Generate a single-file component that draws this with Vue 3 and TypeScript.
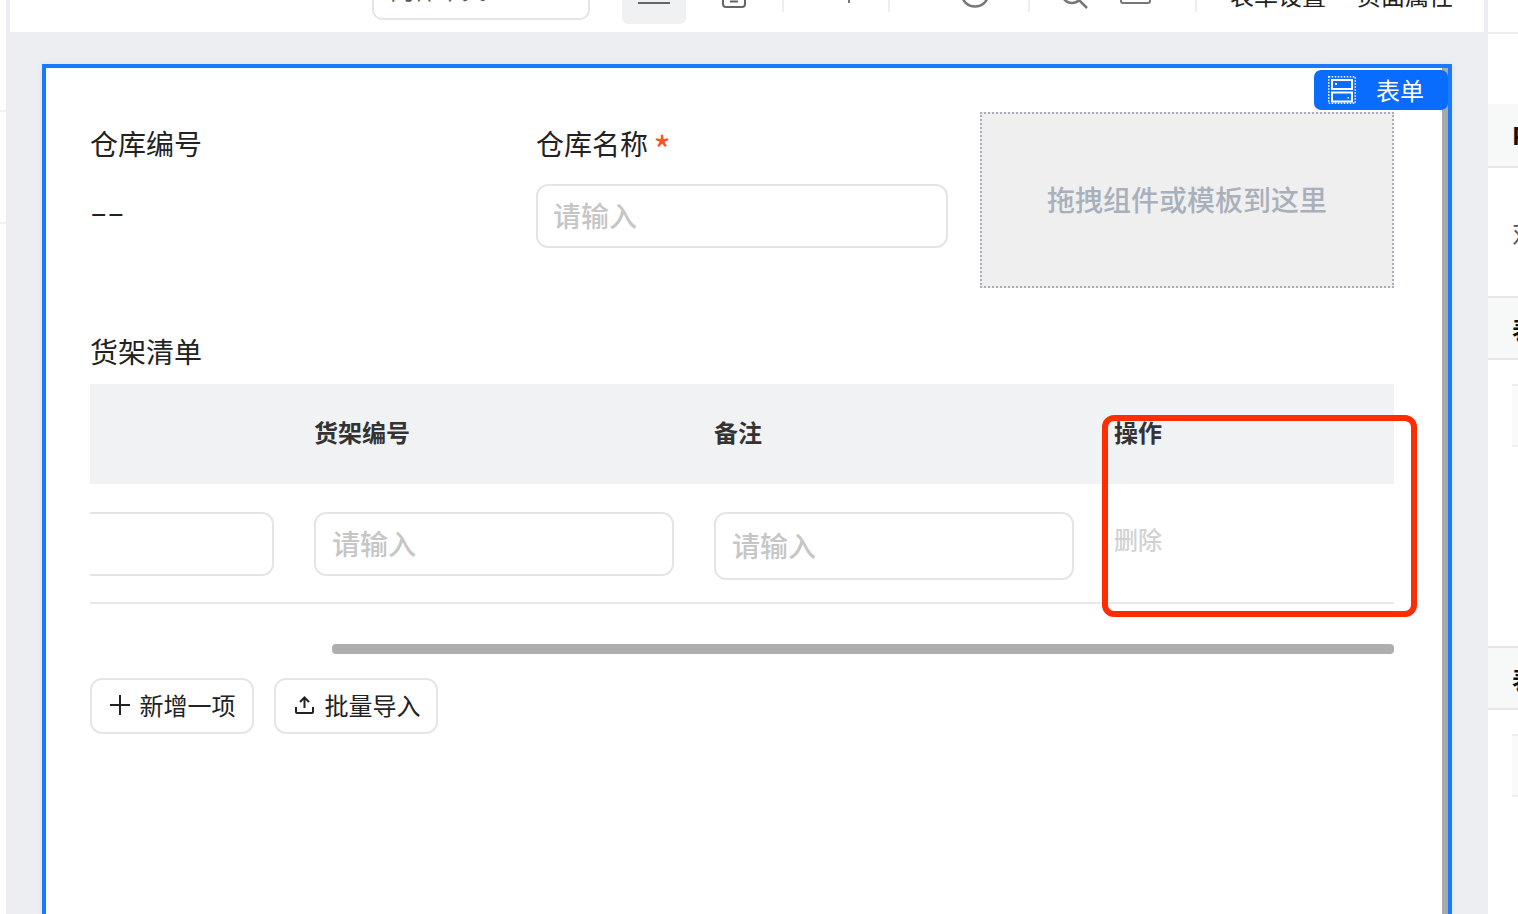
<script setup lang="ts">
const columns: { key: string; label: string }[] = [
  { key: 'blank', label: '' },
  { key: 'code', label: '货架编号' },
  { key: 'note', label: '备注' },
  { key: 'action', label: '操作' },
]
</script>

<template>
  <div class="root">
    <aside class="left-strip">
      <div class="strip-a"></div>
      <div class="strip-b"></div>
    </aside>

    <main class="canvas">
      <header class="topbar">
        <div class="search"><span>内件中文</span></div>
        <div class="tool-active">
          <svg width="32" height="28" viewBox="0 0 32 28"><path d="M0 3h32M0 14h32M0 27h32" stroke="#666" stroke-width="2" /></svg>
        </div>
        <svg class="i-save" width="24" height="32" viewBox="0 0 24 32"><rect x="1" y="1" width="22" height="30" rx="3" fill="none" stroke="#666" stroke-width="2" /><path d="M8 25.500h8" stroke="#666" stroke-width="2" /></svg>
        <i class="divider d1"></i>
        <svg class="i-plus" width="22" height="22" viewBox="0 0 22 22"><path d="M11 0v22M0 11h22" stroke="#777" stroke-width="2" /></svg>
        <i class="divider d2"></i>
        <svg class="i-circle" width="30" height="30" viewBox="0 0 30 30"><circle cx="15" cy="15" r="13.500" fill="none" stroke="#777" stroke-width="2.500" /></svg>
        <i class="divider d3"></i>
        <svg class="i-search" width="28" height="28" viewBox="0 0 28 28"><circle cx="12" cy="12" r="10" fill="none" stroke="#777" stroke-width="2.500" /><path d="M19 19l8 8" stroke="#777" stroke-width="2.500" /></svg>
        <svg class="i-rect" width="31" height="24" viewBox="0 0 31 24"><rect x="1" y="1" width="29" height="22" rx="2" fill="none" stroke="#777" stroke-width="2" /></svg>
        <i class="divider d4"></i>
        <span class="bar-text t1">表单设置</span>
        <span class="bar-text t2">页面属性</span>
      </header>

      <section class="frame">
        <div class="frame-body">
          <div class="top-row">
            <div class="field">
              <div class="label">仓库编号</div>
              <div class="readonly"><span>--</span></div>
            </div>
            <div class="field">
              <div class="label">仓库名称 <em class="required">*</em></div>
              <input class="text-input name-input" placeholder="请输入" />
            </div>
            <div class="dropzone">拖拽组件或模板到这里</div>
          </div>

          <div class="label list-title">货架清单</div>

          <div class="table-wrap">
            <div class="thead">
              <div v-for="col in columns" :key="col.key" class="th">{{ col.label }}</div>
            </div>
            <div class="tbody-row">
              <div class="td"><div class="cut-input"></div></div>
              <div class="td"><input class="text-input cell-input" placeholder="请输入" /></div>
              <div class="td"><input class="text-input cell-input tall" placeholder="请输入" /></div>
              <div class="td action">删除</div>
            </div>
          </div>

          <div class="hscroll"><div class="hthumb"></div></div>

          <div class="buttons">
            <button class="btn" type="button">
              <svg width="22" height="22" viewBox="0 0 22 22"><path d="M11 1v20M1 11h20" stroke="#222" stroke-width="2" /></svg>
              <span>新增一项</span>
            </button>
            <button class="btn btn-up" type="button">
              <svg width="19" height="18" viewBox="0 0 19 18"><path d="M9.500 12V1.500M5 6l4.500-4.500L14 6M1 11v5a1 1 0 0 0 1 1h15a1 1 0 0 0 1-1v-5" fill="none" stroke="#222" stroke-width="2" /></svg>
              <span>批量导入</span>
            </button>
          </div>
        </div>
        <div class="v-scroll"></div>

        <div class="tag">
          <svg width="28" height="28" viewBox="0 0 28 28">
            <rect x="0.750" y="0.750" width="26.500" height="26.500" fill="none" stroke="#fff" stroke-width="1.500" stroke-dasharray="1.500 1.500" />
            <rect x="4" y="4" width="20" height="9" fill="none" stroke="#fff" stroke-width="2" />
            <rect x="4" y="16.500" width="20" height="9" fill="none" stroke="#fff" stroke-width="2" />
            <rect x="7" y="7" width="2" height="2" fill="#fff" />
            <rect x="19.500" y="21" width="1.500" height="1.500" fill="#fff" />
          </svg>
          <span>表单</span>
        </div>
      </section>
    </main>

    <aside class="right-panel">
      <div class="rp-top"></div>
      <div class="rp-head first"><b>Props</b></div>
      <div class="rp-body body-a"><span>对齐方式</span></div>
      <div class="rp-head low"><b>表单</b></div>
      <div class="rp-body body-b"><div class="rp-box"></div></div>
      <div class="rp-head low"><b>表单</b></div>
      <div class="rp-body body-c"><div class="rp-box"></div></div>
    </aside>

    <div class="highlight"></div>
  </div>
</template>

<style scoped>
.root {
  position: relative;
  display: flex;
  width: 1518px;
  height: 914px;
  overflow: hidden;
  background: #fff;
  font-family: "Noto Sans CJK SC", "Noto Sans", sans-serif;
  color: #222;
}
.left-strip { width: 6px; flex: none; }
.strip-a { height: 110px; border-bottom: 2px solid #f1f1f3; }
.strip-b { height: 110px; border-bottom: 2px solid #f1f1f3; }

.canvas {
  width: 1482px;
  flex: none;
  display: flex;
  flex-direction: column;
  background: #edeef2;
}
.topbar {
  height: 32px;
  flex: none;
  margin: 0 4px;
  background: #fff;
  display: flex;
  align-items: flex-end;
  overflow: hidden;
}
.search {
  flex: none;
  width: 218px;
  height: 60px;
  margin: 0 0 12px 362px;
  box-sizing: border-box;
  border: 2px solid #e5e5e6;
  border-radius: 10px;
  padding: 0 16px 11px;
  display: flex;
  align-items: flex-end;
  font-size: 24px;
  line-height: 36px;
  color: #555;
}
.tool-active {
  flex: none;
  width: 64px;
  height: 60px;
  margin: 0 0 8px 32px;
  background: #f0f1f3;
  border-radius: 6px;
  display: flex;
  align-items: flex-end;
  justify-content: center;
  padding-bottom: 20px;
  box-sizing: border-box;
}
.tool-active svg { flex: none; }
.topbar svg { flex: none; }
.i-save { margin: 0 0 24px 36px; }
.divider { flex: none; width: 2px; height: 40px; margin-bottom: 20px; background: #eeeef0; }
.d1 { margin-left: 36px; }
.i-plus { margin: 0 0 29px 54px; }
.d2 { margin-left: 28px; }
.i-circle { margin: 0 0 24px 70px; }
.d3 { margin-left: 38px; }
.i-search { margin: 0 0 23px 30px; }
.i-rect { margin: 0 0 28px 32px; }
.d4 { margin-left: 44px; }
.bar-text { flex: none; font-size: 24px; line-height: 36px; margin-bottom: 19px; color: #222; white-space: nowrap; }
.t1 { margin-left: 33px; }
.t2 { margin-left: 31px; }

.frame {
  position: relative;
  margin: 32px 36px 0;
  flex: 1;
  min-height: 0;
  box-sizing: content-box;
  border: 4px solid #1a7aff;
  border-bottom-width: 0;
  background: #fff;
  display: flex;
  box-shadow: 0 0 6px rgba(0, 0, 0, 0.06);
}
.frame-body { flex: 1; min-width: 0; padding: 44px 48px 0 44px; }
.v-scroll { width: 6px; flex: none; background: #a8a9ac; }
.tag {
  position: absolute;
  top: 2px;
  right: 0;
  width: 134px;
  height: 40px;
  box-sizing: border-box;
  padding-left: 14px;
  display: flex;
  align-items: center;
  gap: 20px;
  background: #0a6cff;
  border-radius: 7px;
  color: #fff;
  font-size: 24px;
  line-height: 40px;
}
.tag span { margin-bottom: 0; }

.top-row { display: grid; grid-template-columns: 446px 444px 414px; height: 176px; }
.field { padding-top: 13px; }
.label { font-size: 28px; line-height: 36px; color: #222; white-space: nowrap; }
.required {
  font-style: normal;
  font-size: 38px;
  line-height: 0;
  color: #ff5220;
  margin-left: -1px;
  vertical-align: -10px;
}
.readonly { margin-top: 32px; font-size: 28px; line-height: 36px; color: #222; }
.readonly span { display: inline-block; transform: scaleX(1.78); transform-origin: 0 50%; }
.text-input {
  display: block;
  box-sizing: border-box;
  border: 2px solid #e5e5e6;
  border-radius: 12px;
  background: #fff;
  padding: 0 16px;
  font-family: inherit;
  font-size: 28px;
  font-weight: 500;
  outline: none;
}
.text-input::placeholder { color: #c6c6c6; opacity: 1; }
.name-input { margin-top: 23px; width: 412px; height: 64px; padding: 0 15px 3px; }
.dropzone {
  box-sizing: border-box;
  height: 176px;
  border: 2px dotted #a9aeb8;
  background: #efefef;
  display: flex;
  align-items: center;
  justify-content: center;
  padding-bottom: 2px;
  font-size: 28px;
  font-weight: 500;
  color: #a9b0bc;
}
.list-title { margin-top: 45px; margin-bottom: 15px; }

.table-wrap { width: 1304px; overflow: hidden; }
.thead, .tbody-row { display: grid; grid-template-columns: 224px 400px 400px 280px; }
.thead { height: 100px; background: #f1f2f4; align-items: center; }
.th { font-size: 24px; font-weight: 700; line-height: 36px; color: #333; padding-bottom: 4px; }
.tbody-row { height: 120px; box-sizing: border-box; border-bottom: 2px solid #e8e9ec; }
.td { padding-top: 28px; }
.cut-input {
  width: 184px;
  height: 64px;
  box-sizing: border-box;
  border: 2px solid #e5e5e6;
  border-left: 0;
  border-radius: 0 12px 12px 0;
}
.cell-input { width: 360px; height: 64px; font-size: 28px; padding: 0 16px 3px; }
.cell-input.tall { height: 68px; }
.action { padding-top: 37px; font-size: 24px; font-weight: 500; line-height: 36px; color: #d2d2d2; }

.hscroll { margin-top: 40px; width: 1304px; height: 10px; }
.hthumb { margin-left: 242px; height: 10px; background: #aeaeae; border-radius: 4px; }

.buttons { display: flex; gap: 20px; margin-top: 24px; }
.btn {
  width: 164px;
  height: 56px;
  box-sizing: border-box;
  border: 2px solid #e6e6e6;
  border-radius: 12px;
  background: #fff;
  display: flex;
  align-items: center;
  justify-content: center;
  gap: 9px;
  padding: 0;
  font-family: inherit;
  font-size: 24px;
  color: #222;
}
.btn svg { margin-bottom: 2px; }
.btn span { margin-bottom: 4px; }
.btn-up { gap: 11px; padding-left: 3px; }

.right-panel { width: 30px; flex: none; overflow: hidden; background: #fff; white-space: nowrap; }
.rp-top { height: 32px; border-bottom: 2px solid #eeeef1; margin-bottom: 70px; }
.rp-head {
  height: 60px;
  border-top: 2px solid #e5e6ea;
  border-bottom: 2px solid #e5e6ea;
  background: #f7f8f8;
  padding-left: 24px;
  font-size: 24px;
  line-height: 58px;
  color: #111;
}
.rp-head.first { border-top-color: transparent; }
.rp-head.low { line-height: 62px; }
.rp-body { padding-left: 24px; }
.body-a { height: 128px; padding-left: 24px; padding-top: 46px; box-sizing: border-box; font-size: 24px; line-height: 36px; color: #555; }
.body-b { height: 286px; padding-top: 24px; box-sizing: border-box; }
.body-c { height: 204px; padding-top: 24px; box-sizing: border-box; }
.rp-box { height: 63px; box-sizing: border-box; background: #fafafa; border-top: 2px solid #eeeef0; border-bottom: 2px solid #eeeef0; }

.highlight {
  position: absolute;
  left: 1102px;
  top: 415px;
  width: 315px;
  height: 202px;
  box-sizing: border-box;
  border: 6px solid #ff2d00;
  border-radius: 12px;
  pointer-events: none;
}
</style>

<style>
html, body { margin: 0; overflow: hidden; background: #fff; }
</style>
